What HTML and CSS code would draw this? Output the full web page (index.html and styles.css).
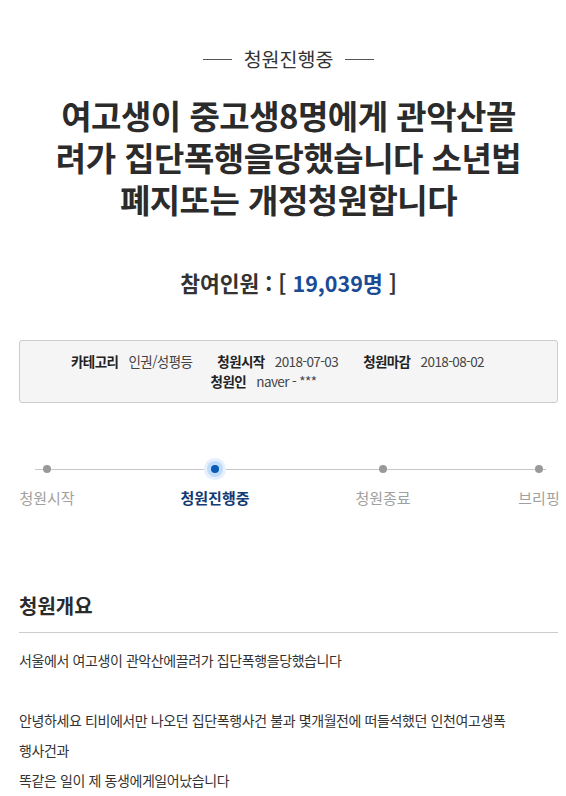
FILE: index.html
```html
<!DOCTYPE html>
<html lang="ko">
<head>
  <meta charset="UTF-8">
  <title>청원진행중</title>
  <link rel="stylesheet" href="styles.css">
</head>
<body>
  <div class="page">
    <div class="status"><span>청원진행중</span></div>

    <h1 class="title">여고생이 중고생8명에게 관악산끌<br>려가 집단폭행을당했습니다 소년법<br>폐지또는 개정청원합니다</h1>

    <p class="count">참여인원 : [ <span class="num">19,039명</span> ]</p>

    <!-- 청원 정보 -->
    <div class="info">
      <div class="info-row">
        <span class="item"><b>카테고리</b> 인권/성평등</span>
        <span class="item"><b>청원시작</b> 2018-07-03</span>
        <span class="item"><b>청원마감</b> 2018-08-02</span>
      </div>
      <div class="info-row sub">
        <span class="item"><b>청원인</b> naver - ***</span>
      </div>
    </div>

    <!-- 진행 단계 -->
    <div class="steps">
      <div class="step"><i class="dot"></i><span>청원시작</span></div>
      <div class="step active"><i class="dot"></i><span>청원진행중</span></div>
      <div class="step"><i class="dot"></i><span>청원종료</span></div>
      <div class="step last"><i class="dot"></i><span>브리핑</span></div>
    </div>

    <h2 class="section">청원개요</h2>
    <div class="content">
      서울에서 여고생이 관악산에끌려가 집단폭행을당했습니다<br>
      <br>
      안녕하세요 티비에서만 나오던 집단폭행사건 불과 몇개월전에 떠들석했던 인천여고생폭<br>행사건과<br>
      똑같은 일이 제 동생에게일어났습니다
    </div>
  </div>
</body>
</html>
```

FILE: styles.css
```css
* {
  box-sizing: border-box;
}

body {
  margin: 0;
  font-family: "Noto Sans CJK KR", "Noto Sans", sans-serif;
  background: #fff;
  color: #333;
}

.page {
  padding: 0 8px 0 19px;
}

.status {
  display: flex;
  justify-content: center;
  align-items: center;
  margin-top: 43px;
  font-size: 19.5px;
  line-height: 32px;
  color: #333;
}

.status::before,
.status::after {
  content: "";
  width: 29px;
  border-top: 1px solid #555;
  margin: 0 12px;
}

.title {
  margin: 19px 0 0;
  text-align: center;
  font-size: 33px;
  font-weight: 700;
  line-height: 42px;
  letter-spacing: -0.5px;
  color: #2b2b2b;
}

.count {
  margin: 48px 0 0;
  text-align: center;
  font-size: 21.5px;
  font-weight: 700;
  line-height: 30px;
  color: #333;
}

.count .num {
  color: #1a4b94;
}

.info {
  margin-top: 42px;
  background: #f5f5f5;
  border: 1px solid #ccc;
  border-radius: 3px;
  padding: 10px 0 11px;
  font-size: 13.5px;
  line-height: 20px;
  color: #444;
  letter-spacing: -0.6px;
}

.info-row {
  display: flex;
  justify-content: center;
  gap: 25px;
  padding-right: 22px;
}

.info-row.sub {
  padding-right: 50px;
}

.info b {
  color: #222;
  margin-right: 7px;
}

.steps {
  position: relative;
  display: flex;
  justify-content: space-between;
  margin-top: 59px;
  margin-right: -8px;
}

.steps::before {
  content: "";
  position: absolute;
  left: 16px;
  right: 20px;
  top: 7px;
  border-top: 1px solid #c8c8c8;
}

.step {
  position: relative;
  display: flex;
  flex-direction: column;
  align-items: center;
  width: 56px;
  font-size: 15px;
  color: #a0a0a0;
}

.step.active {
  width: 70px;
}

.step.last {
  width: 46px;
  margin-right: 4px;
}

.dot {
  width: 8px;
  height: 8px;
  margin: 3px 0;
  border-radius: 50%;
  background: #999;
}

.step.active .dot {
  background: #0a5ab8;
  box-shadow: 0 0 0 4px #bfdcfb, 0 0 0 7px #e6f1fd;
}

.step span {
  margin-top: 12px;
  line-height: 20px;
  white-space: nowrap;
}

.step.active span {
  color: #123a73;
  font-weight: 700;
}

.section {
  margin: 82px 0 0;
  font-size: 20px;
  font-weight: 700;
  line-height: 32px;
  color: #2b2b2b;
  padding-bottom: 10px;
  border-bottom: 1px solid #ccc;
}

.content {
  margin-top: 12px;
  font-size: 14px;
  line-height: 30px;
  color: #333;
  letter-spacing: -0.4px;
}
```
